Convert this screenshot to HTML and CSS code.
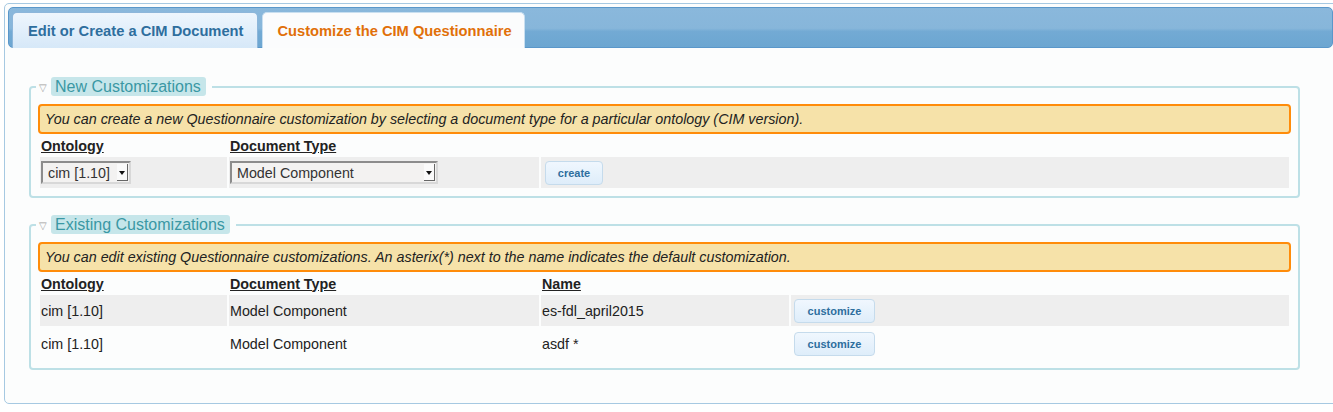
FILE: index.html
```html
<!DOCTYPE html>
<html>
<head>
<meta charset="utf-8">
<link rel="stylesheet" href="styles.css">
</head>
<body>
<div class="widget">
  <div class="tabbar">
    <div class="tab">Edit or Create a CIM Document</div>
    <div class="tab active">Customize the CIM Questionnaire</div>
  </div>
  <div class="panel">
    <fieldset class="box">
      <legend><span class="tri">&#9661;</span><span class="legend-label">New Customizations</span></legend>
      <div class="info">You can create a new Questionnaire customization by selecting a document type for a particular ontology (CIM version).</div>
      <table class="grid">
        <colgroup><col class="c1"><col class="c2"><col></colgroup>
        <tr class="head"><th>Ontology</th><th>Document Type</th><th></th></tr>
        <tr class="row grey">
          <td><div class="select s-small"><span class="val">cim [1.10]</span><span class="arrow"></span></div></td>
          <td><div class="select s-wide"><span class="val">Model Component</span><span class="arrow"></span></div></td>
          <td><button class="btn btn-create">create</button></td>
        </tr>
      </table>
    </fieldset>

    <fieldset class="box">
      <legend><span class="tri">&#9661;</span><span class="legend-label">Existing Customizations</span></legend>
      <div class="info">You can edit existing Questionnaire customizations. An asterix(*) next to the name indicates the default customization.</div>
      <table class="grid">
        <colgroup><col class="c1"><col class="c2"><col class="c3"><col></colgroup>
        <tr class="head"><th>Ontology</th><th>Document Type</th><th>Name</th><th></th></tr>
        <tr class="row grey">
          <td>cim [1.10]</td><td>Model Component</td><td>es-fdl_april2015</td>
          <td><button class="btn btn-cust">customize</button></td>
        </tr>
        <tr class="row">
          <td>cim [1.10]</td><td>Model Component</td><td>asdf *</td>
          <td><button class="btn btn-cust">customize</button></td>
        </tr>
      </table>
    </fieldset>
  </div>
</div>
</body>
</html>
```

FILE: styles.css
```css
html, body {
  margin: 0;
  padding: 0;
  background: #ffffff;
  overflow: hidden;
}
body {
  font-family: "Liberation Sans", Arial, sans-serif;
  color: #222222;
}
.widget {
  margin: 3px 0 0 4px;
  width: 1340px;
  height: 401px;
  box-sizing: border-box;
  border: 1px solid #a6c9e2;
  border-radius: 5px;
  background: #fcfdfd;
  padding: 3px;
}
.tabbar {
  width: 1325px;
  height: 41px;
  box-sizing: border-box;
  border: 1px solid #5a97ca;
  border-radius: 5px;
  background: linear-gradient(to bottom, #8ab8dc 0%, #87b6da 52%, #73aad4 60%, #6ca6d1 100%);
  display: flex;
  align-items: flex-end;
  gap: 4px;
  padding: 0 0 0 3px;
}
.tab {
  box-sizing: border-box;
  height: 36px;
  padding: 0 14px 0 15px;
  display: flex;
  align-items: center;
  font-size: 14.7px;
  font-weight: bold;
  color: #2e6e9e;
  border: 1px solid #8db6da;
  border-bottom: 0;
  border-radius: 5px 5px 0 0;
  background: linear-gradient(to bottom, #eef6fd 0%, #e2effb 50%, #d6e8f8 100%);
  margin-bottom: -1px;
}
.tab.active {
  color: #e17009;
  background: #fbfcfd;
  border-color: #c9dff0;
  padding: 0 12px 0 14px;
}
.panel {
  padding: 29px 0 0 21px;
}
fieldset.box {
  box-sizing: border-box;
  width: 1271px;
  margin: 0 0 17px 0;
  border: 2px solid #bde0e6;
  border-radius: 4px;
  padding: 7px 7px 6px 7px;
}
fieldset.box legend {
  padding: 0 6px 0 0;
  margin-left: -2px;
  display: flex;
  align-items: center;
  height: 20px;
  position: relative;
  top: -1px;
}
.tri {
  font-size: 10px;
  color: #a0a0a0;
  width: 13px;
  display: inline-block;
  text-align: center;
  margin-right: 2px;
  position: relative;
  top: 1px;
}
.legend-label {
  background: #c6e6ea;
  color: #3a98a4;
  font-size: 16px;
  line-height: 19px;
  padding: 0 5px 0 4px;
  border-radius: 3px;
}
.info {
  border: 2px solid #ff8c0a;
  border-radius: 4px;
  background: #f6e2a9;
  font-size: 14.3px;
  font-style: italic;
  line-height: 16px;
  padding: 5px 5px 5px 5px;
  color: #222;
}
table.grid {
  width: 100%;
  border-collapse: separate;
  border-spacing: 2px;
  margin: 0;
  table-layout: fixed;
  font-size: 14.3px;
}
col.c1 { width: 187px; }
col.c2 { width: 310px; }
col.c3 { width: 248px; }
.grid th {
  text-align: left;
  font-weight: bold;
  text-decoration: underline;
  padding: 0 1px;
  height: 19px;
  vertical-align: middle;
  line-height: 16px;
}
.grid td {
  padding: 0 1px;
  height: 31px;
  vertical-align: middle;
  color: #222;
}
.grid tr.row td {
  line-height: 16px;
}
.grid tr.grey td {
  background: #eeeeee;
}
.grid tr.row:not(.grey) td {
  height: 32px;
}
.select {
  box-sizing: border-box;
  height: 23px;
  border: 2px solid #8c8c8c;
  border-right-color: #d8d8d8;
  border-bottom-color: #d8d8d8;
  background: #f3f2f1;
  display: flex;
  align-items: center;
  justify-content: space-between;
  color: #333;
  padding-left: 5px;
}
.s-small { width: 90px; }
.s-wide { width: 208px; }
.select .arrow {
  width: 11px;
  height: 17px;
  box-sizing: border-box;
  margin-right: 1px;
  background: #fafafa;
  border-right: 1px solid #666;
  border-bottom: 1px solid #666;
  position: relative;
}
.select .arrow::after {
  content: "";
  position: absolute;
  left: 2px;
  top: 7px;
  border-left: 3px solid transparent;
  border-right: 3px solid transparent;
  border-top: 4px solid #111;
}
.btn {
  font-family: "Liberation Sans", Arial, sans-serif;
  font-size: 11px;
  font-weight: bold;
  color: #2e6e9e;
  background: linear-gradient(to bottom, #f0f7fe 0%, #deedfa 100%);
  border: 1px solid #c5dbec;
  border-radius: 4px;
  height: 24px;
  padding: 0;
  margin-left: 2px;
}
.btn-create { width: 58px; margin-left: 3px; }
.btn-cust { width: 81px; }
```
